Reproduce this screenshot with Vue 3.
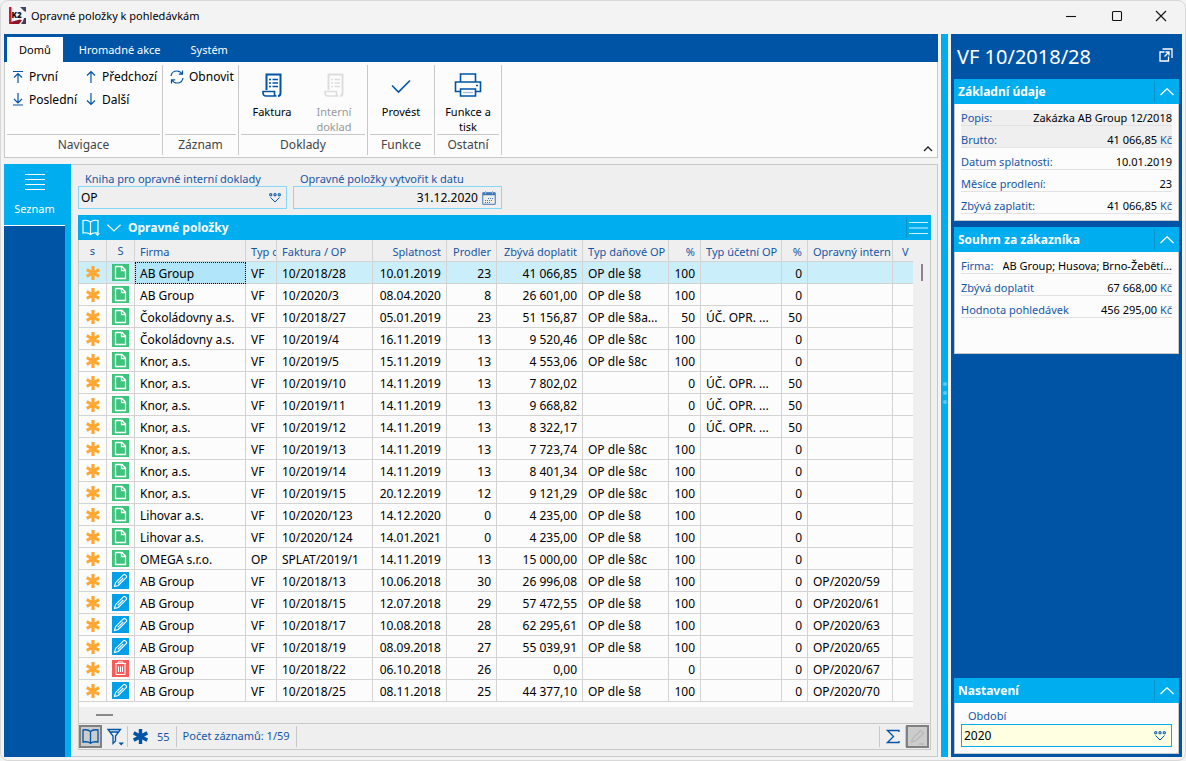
<script setup>
import { ref } from 'vue'

const tabs = ['Domů', 'Hromadné akce', 'Systém']
const activeTab = ref(0)
const selected = ref(0)
const book = ref('OP')
const date = ref('31.12.2020')
const period = ref('2020')

const columns = [
  { label: 's', kind: 'c' }, { label: 'S', kind: 'c' }, { label: 'Firma' }, { label: 'Typ c' },
  { label: 'Faktura / OP' }, { label: 'Splatnost', kind: 'r' }, { label: 'Prodler', kind: 'r' },
  { label: 'Zbývá doplatit', kind: 'r' }, { label: 'Typ daňové OP' }, { label: '%', kind: 'r' },
  { label: 'Typ účetní OP' }, { label: '%', kind: 'r' }, { label: 'Opravný intern' }, { label: 'V', kind: 'v' },
]

const rows = [
  ['doc', 'AB Group', 'VF', '10/2018/28', '10.01.2019', '23', '41 066,85', 'OP dle §8', '100', '', '0', ''],
  ['doc', 'AB Group', 'VF', '10/2020/3', '08.04.2020', '8', '26 601,00', 'OP dle §8', '100', '', '0', ''],
  ['doc', 'Čokoládovny a.s.', 'VF', '10/2018/27', '05.01.2019', '23', '51 156,87', 'OP dle §8a...', '50', 'ÚČ. OPR. ...', '50', ''],
  ['doc', 'Čokoládovny a.s.', 'VF', '10/2019/4', '16.11.2019', '13', '9 520,46', 'OP dle §8c', '100', '', '0', ''],
  ['doc', 'Knor, a.s.', 'VF', '10/2019/5', '15.11.2019', '13', '4 553,06', 'OP dle §8c', '100', '', '0', ''],
  ['doc', 'Knor, a.s.', 'VF', '10/2019/10', '14.11.2019', '13', '7 802,02', '', '0', 'ÚČ. OPR. ...', '50', ''],
  ['doc', 'Knor, a.s.', 'VF', '10/2019/11', '14.11.2019', '13', '9 668,82', '', '0', 'ÚČ. OPR. ...', '50', ''],
  ['doc', 'Knor, a.s.', 'VF', '10/2019/12', '14.11.2019', '13', '8 322,17', '', '0', 'ÚČ. OPR. ...', '50', ''],
  ['doc', 'Knor, a.s.', 'VF', '10/2019/13', '14.11.2019', '13', '7 723,74', 'OP dle §8c', '100', '', '0', ''],
  ['doc', 'Knor, a.s.', 'VF', '10/2019/14', '14.11.2019', '13', '8 401,34', 'OP dle §8c', '100', '', '0', ''],
  ['doc', 'Knor, a.s.', 'VF', '10/2019/15', '20.12.2019', '12', '9 121,29', 'OP dle §8c', '100', '', '0', ''],
  ['doc', 'Lihovar a.s.', 'VF', '10/2020/123', '14.12.2020', '0', '4 235,00', 'OP dle §8', '100', '', '0', ''],
  ['doc', 'Lihovar a.s.', 'VF', '10/2020/124', '14.01.2021', '0', '4 235,00', 'OP dle §8', '100', '', '0', ''],
  ['doc', 'OMEGA s.r.o.', 'OP', 'SPLAT/2019/1', '14.11.2019', '13', '15 000,00', 'OP dle §8c', '100', '', '0', ''],
  ['pen', 'AB Group', 'VF', '10/2018/13', '10.06.2018', '30', '26 996,08', 'OP dle §8', '100', '', '0', 'OP/2020/59'],
  ['pen', 'AB Group', 'VF', '10/2018/15', '12.07.2018', '29', '57 472,55', 'OP dle §8', '100', '', '0', 'OP/2020/61'],
  ['pen', 'AB Group', 'VF', '10/2018/17', '10.08.2018', '28', '62 295,61', 'OP dle §8', '100', '', '0', 'OP/2020/63'],
  ['pen', 'AB Group', 'VF', '10/2018/19', '08.09.2018', '27', '55 039,91', 'OP dle §8', '100', '', '0', 'OP/2020/65'],
  ['bin', 'AB Group', 'VF', '10/2018/22', '06.10.2018', '26', '0,00', '', '0', '', '0', 'OP/2020/67'],
  ['pen', 'AB Group', 'VF', '10/2018/25', '08.11.2018', '25', '44 377,10', 'OP dle §8', '100', '', '0', 'OP/2020/70'],
]
const stateNames = { doc: 'Nový', pen: 'Upravit', bin: 'Smazat' }

const basics = [
  ['Popis:', 'Zakázka AB Group 12/2018', ''],
  ['Brutto:', '41 066,85', 'Kč'],
  ['Datum splatnosti:', '10.01.2019', ''],
  ['Měsíce prodlení:', '23', ''],
  ['Zbývá zaplatit:', '41 066,85', 'Kč'],
]
const summary = [
  ['Firma:', 'AB Group; Husova; Brno-Žebětí...', ''],
  ['Zbývá doplatit', '67 668,00', 'Kč'],
  ['Hodnota pohledávek', '456 295,00', 'Kč'],
]
const cards = [
  { title: 'Základní údaje', rows: basics, name: 'basics' },
  { title: 'Souhrn za zákazníka', rows: summary, name: 'summary' },
]
</script>

<template>
  <div class="window">
    <header class="titlebar">
      <svg class="logo" width="17" height="17" viewBox="0 0 17 17" aria-hidden="true">
        <path d="M0 0h17v17H0z" fill="#f6f4f6" />
        <path d="M0 0h2.500v17H0z" fill="#d8142c" />
        <path d="M11 0h6v5l-2-1-2-2z" fill="#44455f" />
        <path d="M15 11h2v6h-5l2-3z" fill="#3c3d58" />
        <path d="M2 15l5-1.500 4-1 2 1-3 3.500H2z" fill="#8f1526" />
        <text x="2.500" y="11" class="mark">K2</text>
      </svg>
      <span class="caption">Opravné položky k pohledávkám</span>
      <div class="winbtns">
        <button type="button" aria-label="Minimalizovat"><svg width="12" height="12" viewBox="0 0 12 12"><path d="M1 6.500h10" /></svg></button>
        <button type="button" aria-label="Maximalizovat"><svg width="12" height="12" viewBox="0 0 12 12"><rect x="1.500" y="1.500" width="9" height="9" rx="1" /></svg></button>
        <button type="button" aria-label="Zavřít"><svg width="12" height="12" viewBox="0 0 12 12"><path d="M1 1l10 10M11 1L1 11" /></svg></button>
      </div>
    </header>

    <div class="body">
      <div class="left">
        <nav class="tabs">
          <button v-for="(t, i) in tabs" :key="t" type="button" :class="{ active: i === activeTab }" @click="activeTab = i">{{ t }}</button>
        </nav>
        <section class="ribbon">
          <div class="group nav">
            <div class="tools grid">
              <button type="button" class="small"><svg width="12" height="13" viewBox="0 0 12 13"><path d="M1 1.500h10M6 13V3.500M2 7.500l4-4 4 4" /></svg>První</button>
              <button type="button" class="small"><svg width="12" height="13" viewBox="0 0 12 13"><path d="M6 13V1.500M2 5.500l4-4 4 4" /></svg>Předchozí</button>
              <button type="button" class="small"><svg width="12" height="13" viewBox="0 0 12 13"><path d="M1 12h10M6 0v10M2 6l4 4 4-4" /></svg>Poslední</button>
              <button type="button" class="small"><svg width="12" height="13" viewBox="0 0 12 13"><path d="M6 0v11.500M2 7.500l4 4 4-4" /></svg>Další</button>
            </div>
            <div class="gname">Navigace</div>
          </div>
          <div class="group rec">
            <div class="tools">
              <button type="button" class="small"><svg width="14" height="14" viewBox="0 0 14 14"><path d="M1 6C1.500 2.800 4 1 7 1c2 0 3.800 1 4.900 2.800M12.500.500v3.700H8.800M13 8c-.500 3.200-3 5-6 5-2 0-3.800-1-4.900-2.800M1.500 13.500V9.800h3.700" /></svg>Obnovit</button>
            </div>
            <div class="gname">Záznam</div>
          </div>
          <div class="group docs">
            <div class="tools">
              <button v-for="b in [['Faktura', false], ['Interní doklad', true]]" :key="b[0]" type="button" class="big" :disabled="b[1]">
                <svg width="20" height="24" viewBox="0 0 20 24">
                  <path d="M4.500 17V1.500h14V20c0 1.700-1 3-2.500 3" stroke-width="2" />
                  <path d="M1 18.500h11.500v2.500c0 1.200.800 2 2 2H4c-1.800 0-3-1.300-3-3z" stroke-width="1.600" />
                  <path d="M7 6.500h2M10.500 6.500H16M7 10h2M10.500 10H16M7 13.500h2M10.500 13.500H16" stroke-width="1.600" />
                </svg>
                <span>{{ b[0] }}</span>
              </button>
            </div>
            <div class="gname">Doklady</div>
          </div>
          <div class="group act">
            <div class="tools">
              <button type="button" class="big"><svg width="20" height="24" viewBox="0 0 20 24"><path d="M1 12.500l6.500 6.500L19 7.500" stroke-width="1.600" /></svg><span>Provést</span></button>
            </div>
            <div class="gname">Funkce</div>
          </div>
          <div class="group other">
            <div class="tools">
              <button type="button" class="big">
                <svg width="28" height="24" viewBox="0 0 28 24">
                  <path d="M6.500 9V1h15v8M6 18.500H1.500V9h25v9.500H22M6.500 16h15v7h-15zM22 12.500h2" stroke-width="1.600" />
                  <path d="M9 19.500h10" stroke="#9fc0e0" />
                </svg>
                <span>Funkce a tisk</span>
              </button>
            </div>
            <div class="gname">Ostatní</div>
          </div>
          <button type="button" class="collapse" aria-label="Sbalit pás karet"><svg width="10" height="6" viewBox="0 0 10 6"><path d="M1 5l4-4 4 4" /></svg></button>
        </section>

        <main class="work">
          <aside class="side">
            <button type="button" class="sidebtn">
              <svg width="20" height="18" viewBox="0 0 20 18"><path d="M0 1.500h20M0 6.500h20M0 11.500h20M0 16.500h20" /></svg>
              <span>Seznam</span>
            </button>
            <div class="sidefill"></div>
          </aside>
          <div class="content">
            <div class="fields">
              <div class="field">
                <label for="book">Kniha pro opravné interní doklady</label>
                <div class="box">
                  <input id="book" v-model="book" type="text" />
                  <svg width="12" height="10" viewBox="0 0 12 10"><path d="M.750.750h2v2h-2zM5 .750h2v2H5zM9.250.750h2v2h-2zM1.500 4.500L6 9l4.500-4.500" /></svg>
                </div>
              </div>
              <div class="field">
                <label for="date">Opravné položky vytvořit k datu</label>
                <div class="box">
                  <input id="date" v-model="date" type="text" class="right" />
                  <svg class="cal" width="14" height="14" viewBox="0 0 14 14">
                    <path d="M.750 1.750h12.500v11.500H.750z" /><path d="M1 3h12" stroke-width="2.500" /><path d="M3.500 0v3M10.500 0v3" stroke="#9ab4d2" />
                    <path d="M6 7.500h5M3 9.500h8M3 11.500h6" stroke-dasharray="1 1" />
                  </svg>
                </div>
              </div>
            </div>

            <section class="browser">
              <div class="ghead">
                <svg width="18" height="18" viewBox="0 0 18 18"><path d="M8.500 3C7 1.500 4 1 1 1.500V14c3-.500 6 0 7.500 1.500C10 14 13 13.500 16 14V1.500C13 1 10 1.500 8.500 3zv12" /><path d="M13 14.500h5L15.500 17z" fill="#fff" stroke="none" /></svg>
                <svg width="14" height="8" viewBox="0 0 14 8"><path d="M.500.800L7 7 13.500.800" /></svg>
                <h2>Opravné položky</h2>
                <button type="button" aria-label="Nabídka"><svg width="19" height="14" viewBox="0 0 19 14"><path d="M0 1.500h19M0 7h19M0 12.500h19" /></svg></button>
              </div>
              <div class="gbody">
                <div class="tablewrap">
                  <table>
                    <colgroup><col v-for="(c, i) in columns" :key="i" :class="'w' + i" /></colgroup>
                    <thead>
                      <tr><th v-for="(c, i) in columns" :key="i" :class="c.kind" scope="col">{{ c.label }}</th></tr>
                    </thead>
                    <tbody>
                      <tr v-for="(r, n) in rows" :key="n" :class="{ sel: n === selected }" @click="selected = n">
                        <td class="c">
                          <svg width="14" height="14" viewBox="0 0 14 14" role="img" aria-label="Změněno"><path d="M7 0v14M.700 3.600l12.600 6.800M.700 10.400L13.300 3.600" stroke="#ffa733" stroke-width="3.200" /></svg>
                        </td>
                        <td class="c">
                          <svg v-if="r[0] === 'doc'" class="doc" width="17" height="17" viewBox="0 0 17 17" role="img" :aria-label="stateNames[r[0]]"><path d="M3.500 2.500h6.500l3.500 3.500v8.500h-10zM9.500 2.500v4h4" /></svg>
                          <svg v-else-if="r[0] === 'pen'" class="pen" width="17" height="17" viewBox="0 0 17 17" role="img" :aria-label="stateNames[r[0]]"><path d="M2.500 14.500l1-3.800 7.900-7.900c.600-.600 1.300-.600 1.900 0l.900.900c.600.600.600 1.300 0 1.900L6.300 13.500zM11.200 6L5.800 11.400" /></svg>
                          <svg v-else class="bin" width="17" height="17" viewBox="0 0 17 17" role="img" :aria-label="stateNames[r[0]]"><path d="M3 3.500h11M6 3.500V2h5v1.500M4 4v10.500h9V4M6.500 6.500v5.500M8.500 6.500v5.500M10.500 6.500v5.500" /></svg>
                        </td>
                        <td v-for="k in 11" :key="k" :class="[columns[k + 1].kind, { focus: n === selected && k === 1 }]">{{ r[k] }}</td>
                        <td></td>
                      </tr>
                    </tbody>
                  </table>
                  <div class="hscroll"><i></i></div>
                </div>
                <div class="vscroll"><i></i></div>
              </div>
              <footer class="status">
                <button type="button" class="pressed" aria-label="Kniha"><svg width="17" height="15" viewBox="0 0 17 15"><path d="M8.500 2.500C7 1 4 .500 1 1v12c3-.500 6 0 7.500 1.300C10 13 13 12.500 16 13V1C13 .500 10 1 8.500 2.500zv12" /></svg></button>
                <button type="button" class="filter" aria-label="Filtr"><svg width="17" height="18" viewBox="0 0 17 18"><path d="M1 1.500h12.500L8.500 8v5L6 15.500V8zM3 4h8.500" /><path d="M11.500 14.500h5.500L14.200 17.500z" fill="#0054a6" stroke="none" /></svg></button>
                <div class="stat first"><svg width="15" height="15" viewBox="0 0 14 14"><path d="M7 0v14M.700 3.600l12.600 6.800M.700 10.400L13.300 3.600" stroke-width="3.200" /></svg><span>55</span></div>
                <div class="stat">Počet záznamů: 1/59</div>
                <div class="spacer"></div>
                <button type="button" class="sum" aria-label="Součet"><svg width="14" height="15" viewBox="0 0 14 15"><path d="M13 3V1.500H1.500L7.500 7.500l-6 6H13V12" /></svg></button>
                <button type="button" class="pressed edit" aria-label="Upravit"><svg width="16" height="16" viewBox="0 0 16 16"><path d="M1.500 13l1-3.500L10.500 1.500l3 3L5.500 12zM9 15h5" /></svg></button>
              </footer>
            </section>
          </div>
        </main>
      </div>

      <div class="splitter"><i></i><i></i><i></i></div>

      <aside class="panel">
        <div class="ptitle">
          <h1>VF 10/2018/28</h1>
          <button type="button" aria-label="Otevřít v novém okně"><svg width="14" height="14" viewBox="0 0 14 14"><path d="M5.500 4H1v9h8.500V8.500M3.500 1H13v9M5.500 8.500L10 4M6.500 4H10v3.500" /></svg></button>
        </div>
        <section v-for="c in cards" :key="c.name" class="card" :class="c.name">
          <div class="chead"><h2>{{ c.title }}</h2><button type="button" aria-label="Sbalit"><svg width="14" height="8" viewBox="0 0 14 8"><path d="M.500 7L7 .800 13.500 7" /></svg></button></div>
          <dl>
            <div v-for="r in c.rows" :key="r[0]"><dt>{{ r[0] }}</dt><dd>{{ r[1] }}<em v-if="r[2]">&nbsp;{{ r[2] }}</em></dd></div>
          </dl>
        </section>
        <section class="card settings">
          <div class="chead"><h2>Nastavení</h2><button type="button" aria-label="Sbalit"><svg width="14" height="8" viewBox="0 0 14 8"><path d="M.500 7L7 .800 13.500 7" /></svg></button></div>
          <div class="cform">
            <label for="period">Období</label>
            <div class="box">
              <input id="period" v-model="period" type="text" />
              <svg width="12" height="10" viewBox="0 0 12 10"><path d="M.750.750h2v2h-2zM5 .750h2v2H5zM9.250.750h2v2h-2zM1.500 4.500L6 9l4.500-4.500" /></svg>
            </div>
          </div>
        </section>
      </aside>
    </div>
  </div>
</template>

<style>
body { background: #f3f3f3; }
</style>

<style scoped>
.window {
  box-sizing: border-box;
  min-height: 100vh;
  display: flex;
  flex-direction: column;
  background: #f3f3f3;
  border: 1px solid #d8d8d8;
  border-radius: 8px;
  padding: 0 3px 3px;
  font: 12px/16px "Noto Sans", "Open Sans", sans-serif;
  color: #000;
}
.window *, .window *::before { box-sizing: border-box; }
button, input { font: inherit; color: inherit; background: none; border: 0; padding: 0; margin: 0; }
h1, h2, dl, dd { margin: 0; font-weight: normal; }
svg { display: block; flex: none; fill: none; stroke: #0054a6; stroke-width: 1.300; }

.titlebar { height: 33px; display: flex; align-items: center; padding: 0 0 4px 5px; }
.logo { stroke: none; }
.mark { font-size: 8px; font-weight: 900; fill: #15131c; }
.caption { margin-left: 5px; flex: 1; font-size: 11px; }
.winbtns { display: flex; }
.winbtns button { width: 46px; height: 28px; display: grid; place-items: center; }
.winbtns button:last-child { width: 42px; }
.winbtns svg { stroke: #111; stroke-width: 1.100; }

.body { flex: 1; display: flex; }
.left { flex: 1; min-width: 0; display: flex; flex-direction: column; }
.tabs { height: 28px; display: flex; align-items: flex-end; background: #0054a6; padding: 0 3px; }
.tabs button { height: 25px; padding: 0 14px; margin-right: 2px; color: #fff; font-size: 11px; }
.tabs button.active { background: #fcfcfc; color: #000; padding: 0 12px; }

.ribbon { position: relative; height: 96px; display: flex; padding-top: 3px; background: #fcfcfc; border: 1px solid #c8c8c8; border-top: 0; margin-bottom: 6px; }
.group { display: flex; flex-direction: column; border-right: 1px solid #c8c8c8; padding: 0 2px; margin-bottom: 2px; }
.tools { flex: 1; min-height: 0; display: flex; align-items: flex-start; border-bottom: 1px solid #c8c8c8; }
.gname { height: 20px; line-height: 20px; text-align: center; color: #444; }
.nav { width: 158px; padding-left: 2px; }
.grid { display: grid; grid-template-columns: 73px 1fr; grid-auto-rows: 23px; align-content: start; }
.rec { width: 76px; }
.docs { width: 129px; }
.act, .other { width: 67px; }
.small { height: 23px; display: flex; align-items: center; gap: 5px; padding-left: 5px; white-space: nowrap; }
.small svg { stroke-width: 1.200; }
.big { width: 62px; display: flex; flex-direction: column; align-items: center; padding-top: 8px; gap: 7px; font-size: 11px; line-height: 15px; }
.big:disabled { color: #999; }
.big:disabled svg { stroke: #ddd; }
.collapse { position: absolute; right: 4px; bottom: 5px; }
.collapse svg { stroke: #222; }

.work { flex: 1; display: flex; }
.side { width: 67px; display: flex; flex-direction: column; background: #00adef; padding-right: 6px; }
.sidebtn { height: 62px; display: flex; flex-direction: column; align-items: center; gap: 10px; padding-top: 9px; color: #fff; border-bottom: 1px solid #fff; font-size: 11px; }
.sidebtn svg { stroke: #fff; stroke-width: 1; }
.sidefill { flex: 1; background: #0054a6; }
.content { flex: 1; min-width: 0; display: flex; flex-direction: column; background: #efefef; border: 1px solid #c8c8c8; border-left: 0; padding: 6px 6px 6px 7px; }
.fields { display: flex; gap: 6px; margin-bottom: 6px; }
.field { width: 209px; }
label { display: block; color: #1556a5; padding-left: 7px; font-size: 11px; }
.field label { height: 15px; }
.box { height: 23px; display: flex; align-items: center; border: 1px solid #86d6f7; padding: 0 5px 0 2px; }
.box input { flex: 1; min-width: 0; outline: 0; }
.box .right { text-align: right; padding-right: 4px; }
.box svg { stroke-width: 1; }
.box .cal { stroke: #3d77b5; }

.browser { flex: 1; display: flex; flex-direction: column; }
.ghead { height: 25px; display: flex; align-items: center; background: #00adef; color: #fff; padding: 0 3px 0 4px; }
.ghead svg { stroke: #fff; stroke-width: 1.200; margin-right: 7px; }
.ghead h2, .chead h2 { flex: 1; padding-top: 1px; font-size: 12px; font-weight: bold; }
.ghead button { border-left: 1px solid #0b93cc; height: 21px; padding-left: 2px; }
.ghead button svg { margin: 0; stroke: #d5f2ff; }
.gbody { display: flex; flex: 1; border: 1px solid #c8c8c8; border-top: 0; }
.tablewrap { flex: 1; min-width: 0; display: flex; flex-direction: column; background: #fcfcfc; }
table { width: 100%; table-layout: fixed; border-collapse: separate; border-spacing: 0; }
th, td { height: 22px; padding: 2px 5px 0; line-height: 19px; white-space: nowrap; overflow: hidden; border: solid #d3d3d3; border-width: 0 1px 1px 0; font-weight: normal; text-align: left; }
th { background: #efefef; color: #1556a5; font-size: 11px; padding: 1px 0 0 5px; }
th.r { padding-right: 5px; }
th:last-child, td:last-child { border-right: 0; }
.c { text-align: center; padding: 0; }
td.c svg { margin: 0 auto; }
.r { text-align: right; }
th.v { padding-left: 9px; }
.sel td { background: #cbeefb; }
.sel td.focus { background: #b1e6fa; outline: 1px dotted #000; outline-offset: -1px; }
.doc { background: #3cc47c; stroke: #fff; }
.pen { background: #009fe8; stroke: #fff; stroke-width: 1.100; }
.bin { background: #f95a5a; stroke: #fff; stroke-width: 1; }
.w0, .w1 { width: 28px; }
.w2 { width: 111px; }
.w3 { width: 31px; }
.w4 { width: 96px; }
.w5 { width: 74px; }
.w6 { width: 50px; }
.w7, .w8 { width: 86px; }
.w9 { width: 32px; }
.w10 { width: 81px; }
.w11 { width: 26px; }
.w12 { width: 85px; }
.hscroll { height: 16px; margin-top: auto; background: #efefef; padding: 7px 17px; }
.hscroll i { display: block; width: 17px; height: 2px; background: #888; }
.vscroll { width: 17px; padding: 24px 8px; }
.vscroll i { display: block; width: 2px; height: 17px; background: #888; }
.status { height: 26px; display: flex; align-items: center; border: 1px solid #c8c8c8; border-top: 0; padding-right: 1px; color: #1556a5; }
.pressed { width: 23px; height: 23px; display: grid; place-items: center; border: 2px solid #808080; background: #ccc; }
.filter { width: 25px; padding-left: 5px; }
.stat { height: 21px; line-height: 20px; padding: 0 6px; font-size: 11px; border-right: 1px solid #c8c8c8; }
.first { display: flex; align-items: center; gap: 9px; border-left: 1px solid #c8c8c8; padding-left: 5px; }
.spacer { flex: 1; }
.sum { height: 21px; width: 27px; display: grid; place-items: center; border: solid #c8c8c8; border-width: 0 1px; }
.edit svg { stroke: #b8b8b8; }

.splitter { width: 7px; margin: 0 3px; padding-bottom: 6px; background: #00adef; display: flex; flex-direction: column; align-items: center; justify-content: center; gap: 5px; }
.splitter i { width: 4px; height: 4px; border-radius: 2px; background: #5cc9f5; }

.panel { width: 231px; display: flex; flex-direction: column; background: #0054a6; padding: 0 3px 3px; }
.ptitle { height: 45px; display: flex; align-items: center; justify-content: space-between; color: #fff; padding: 0 6px 4px 3px; }
.ptitle h1 { font-size: 20px; line-height: 26px; padding-top: 4px; }
.ptitle svg { stroke: #fff; }
.card { background: #fcfcfc; border: 1px solid #c8c8c8; border-top: 0; margin-bottom: 6px; }
.basics { height: 142px; }
.summary { height: 127px; }
.settings { margin: auto 0 0; }
.chead { height: 25px; display: flex; align-items: center; background: #00adef; color: #fff; margin: 0 -1px; padding-left: 4px; }
.chead button { height: 21px; width: 25px; display: grid; place-items: center; border-left: 1px solid #0b93cc; }
.chead svg { stroke: #fff; }
dl { padding: 0 6px; font-size: 11px; }
dl div { height: 22px; display: flex; justify-content: space-between; gap: 4px; padding-top: 6px; line-height: 15px; border-bottom: 1px solid #e2e2e2; }
.basics dl div:nth-child(1) { background: linear-gradient(transparent 6px, #efefef 6px); }
.basics dl div:nth-child(2) { background: #efefef; }
dt, em { color: #1556a5; font-style: normal; }
dt { flex: none; }
dd { overflow: hidden; text-overflow: ellipsis; white-space: nowrap; }
.cform { padding: 5px 6px 6px; }
.cform .box { background: #ffffe1; border-color: #00adef; }
</style>
